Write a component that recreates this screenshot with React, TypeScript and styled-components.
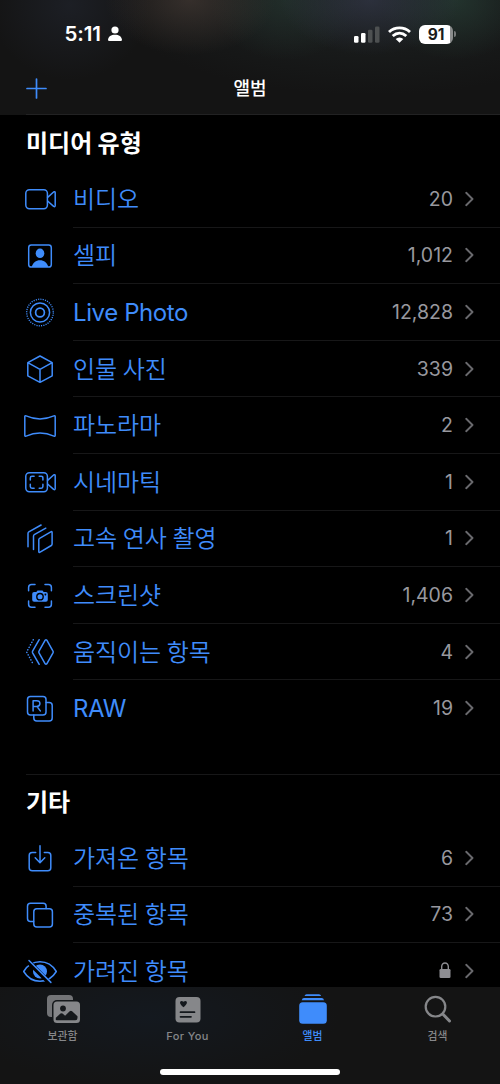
import React from "react";
import styled, { createGlobalStyle } from "styled-components";

const BLUE = "#3f8cfb";
const GREY = "#8e8e93";

const GlobalStyle = createGlobalStyle`
  * { box-sizing: border-box; }
  html, body { margin: 0; padding: 0; background: #000; }
  body {
    font-family: Inter, "Noto Sans CJK KR", "Liberation Sans", sans-serif;
    color: #fff;
    -webkit-font-smoothing: antialiased;
  }
`;

const Screen = styled.div`
  width: 500px;
  height: 1084px;
  display: flex;
  flex-direction: column;
  overflow: hidden;
  background: #000;
`;

const Header = styled.header`
  flex: none;
  height: 115px;
  display: flex;
  flex-direction: column;
  background:
    linear-gradient(90deg, transparent 26px, #222223 26px) bottom / 100% 1px no-repeat,
    radial-gradient(85px 55px at 190px 0, rgba(74, 62, 56, 0.6), transparent),
    radial-gradient(80px 75px at 70px 5px, rgba(34, 38, 48, 0.6), transparent),
    radial-gradient(90px 55px at 370px 0, rgba(54, 58, 78, 0.6), transparent),
    radial-gradient(75px 60px at 285px 0, rgba(38, 56, 50, 0.6), transparent),
    radial-gradient(75px 60px at 455px 0, rgba(38, 60, 52, 0.7), transparent),
    radial-gradient(260px 95px at 370px 0, rgba(34, 42, 42, 0.6), transparent),
    #141414;
`;

const StatusBar = styled.div`
  height: 62px;
  padding: 6px 44px 0 64.5px;
  display: flex;
  align-items: center;
`;

const Clock = styled.span`
  font-size: 20.5px;
  font-weight: 600;
  letter-spacing: -0.1px;
  line-height: 24px;
  width: 43.5px;
`;

const StatusIcons = styled.div`
  margin-left: auto;
  display: flex;
  align-items: center;
  gap: 8px;
`;

const Battery = styled.div`
  display: flex;
  align-items: center;
  gap: 1px;
`;

const BatteryBody = styled.div`
  width: 34px;
  height: 19px;
  border-radius: 6px;
  background: linear-gradient(90deg, #fff 31px, #8b8d8d 31px);
  color: #1a1a1a;
  font-size: 15.5px;
  font-weight: 700;
  line-height: 19px;
  letter-spacing: -0.2px;
  text-align: center;
`;

const BatteryTip = styled.div`
  width: 2px;
  height: 6px;
  border-radius: 0 2px 2px 0;
  background: #777a7a;
`;

const NavBar = styled.div`
  height: 53px;
  padding: 0 26px;
  display: grid;
  grid-template-columns: 1fr auto 1fr;
  align-items: center;
`;

const NavTitle = styled.h1`
  margin: 0;
  font-size: 18px;
  font-weight: 500;
  line-height: 24px;
`;

const Content = styled.main`
  flex: 1;
  min-height: 0;
  overflow: hidden;
`;

const SectionTitle = styled.h2<{ $height: number }>`
  margin: 0;
  height: ${(p) => p.$height}px;
  padding: 2px 0 0 26px;
  display: flex;
  align-items: center;
  font-size: 24px;
  font-weight: 600;
  line-height: 30px;
  word-spacing: -0.7px;
`;

const Divider = styled.hr`
  margin: 36.5px 0 0 26px;
  border: 0;
  height: 1px;
  background: #171718;
`;

const Row = styled.div`
  height: 56.62px;
  padding-left: 20px;
  display: flex;
`;

const IconSlot = styled.div`
  width: 53px;
  display: flex;
  align-items: center;
`;

const RowBody = styled.div<{ $line: boolean }>`
  flex: 1;
  display: flex;
  align-items: center;
  padding-right: 26px;
  border-bottom: 1px solid ${(p) => (p.$line ? "#171718" : "transparent")};
`;

const Label = styled.span<{ $latin: boolean }>`
  flex: 1;
  padding-top: 2px;
  color: ${BLUE};
  font-size: 24px;
  font-weight: ${(p) => (p.$latin ? 400 : 350)};
  letter-spacing: ${(p) => (p.$latin ? "-0.4px" : "-0.05px")};
  word-spacing: ${(p) => (p.$latin ? "0" : "-1px")};
  line-height: 30px;
`;

const Count = styled.span`
  color: #98989e;
  font-size: 19.5px;
  font-weight: 400;
  margin-right: 12px;
  display: flex;
`;

const TabBar = styled.nav`
  flex: none;
  height: 97px;
  display: flex;
  flex-direction: column;
  align-items: center;
  justify-content: space-between;
  padding-bottom: 9px;
  background:
    radial-gradient(190px 70px at 150px 30px, rgba(20, 26, 34, 0.8), transparent),
    #141414;
`;

const Tabs = styled.div`
  width: 100%;
  display: grid;
  grid-template-columns: repeat(4, 1fr);
`;

const Tab = styled.div<{ $active?: boolean }>`
  display: flex;
  flex-direction: column;
  align-items: center;
  padding-top: 4px;
  color: ${(p) => (p.$active ? BLUE : "#86878a")};
`;

const TabLabel = styled.span<{ $latin?: boolean }>`
  font-size: ${(p) => (p.$latin ? 11 : 10.8)}px;
  font-weight: 500;
  letter-spacing: ${(p) => (p.$latin ? "0.35px" : "0")};
  line-height: 16px;
  margin-top: ${(p) => (p.$latin ? 1 : 2)}px;
`;

const HomeIndicator = styled.div`
  width: 180px;
  height: 6px;
  border-radius: 3px;
  background: #fff;
`;

const Glyph = ({ children }: { children: React.ReactNode }) => (
  <svg width="40" height="40" viewBox="-20 -20 40 40" fill="none" stroke={BLUE} strokeWidth="1.5" strokeLinecap="round" strokeLinejoin="round">
    {children}
  </svg>
);

const camcorder = (
  <>
    <rect x="-14.2" y="-9.3" width="21.6" height="19" rx="3.6" />
    <path d="M7.6-1.6 13.6-7q1.6-1 1.6.8V6.600q0 1.800-1.600.8L7.600 2" />
  </>
);

const icons: Record<string, React.ReactNode> = {
  video: camcorder,
  selfie: (
    <>
      <rect x="-11.300" y="-10.900" width="22.600" height="22" rx="2.600" />
      <g fill={BLUE} stroke="none">
        <ellipse cx="0" cy="-2.700" rx="4.300" ry="4.800" />
        <path d="M-8.300 11C-7.300 6.600-4 4.200 0 4.200S7.300 6.600 8.300 11Z" />
      </g>
    </>
  ),
  live: (
    <g transform="translate(0 -0.5)">
      <circle r="4.400" strokeWidth="1.700" />
      <circle r="9.600" />
      <circle r="13.300" strokeWidth="1.300" strokeLinecap="butt" strokeDasharray="1.160 1.160" />
    </g>
  ),
  portrait: <path d="M0-13 12.200-6.300V6.800L0 13.300-12.200 6.800V-6.300ZM-12.200-6.300 0 .4 12.200-6.300M0 .4V13.300" />,
  panorama: (
    <path d="M-15.200-9.200q0-1.300 1.300-.9Q0-4 13.900-10.100q1.300-.4 1.300.9V9.200q0 1.300-1.300.9Q0 4-13.900 10.100q-1.300.4-1.300-.9Z" />
  ),
  cinematic: (
    <>
      {camcorder}
      <path d="M-9.700-1.900V-4.100q0-1.700 1.700-1.700h2.100M-.8-5.800H1.200q1.700 0 1.700 1.700V-1.900M2.900 2.300V4.500q0 1.700-1.700 1.700H-.8M-5.900 6.200H-8q-1.700 0-1.700-1.700V2.300" />
    </>
  ),
  burst: (
    <path d="M-1.200.8q0-1 .8-1.500L10.800-7.200q1.300-.7 1.300.8V5q0 1-.8 1.500L.1 13.200q-1.300.7-1.300-.8ZM5.800-10.800-5.700-4.300q-.8.5-.8 1.500V10.500M1.100-14-11.200-7.100q-.8.5-.8 1.500V7.800" />
  ),
  screenshot: (
    <>
      <path d="M-11.400-5.200V-8.400q0-3 3-3H-5M5-11.400H8.400q3 0 3 3V-5.200M11.400 5V8.200q0 3-3 3H5M-5 11.200H-8.400q-3 0-3-3V5" />
      <path fill={BLUE} stroke="none" fillRule="evenodd" d="M-5.900-4H-3.700L-2.500-5.600H2.500L3.700-4H5.900q1.900 0 1.900 1.900V3.800q0 1.900-1.900 1.900H-5.900q-1.900 0-1.900-1.900V-2.100q0-1.900 1.900-1.900ZM0-3.200A3.900 3.900 0 1 0 0 4.600 3.900 3.900 0 1 0 0-3.200ZM5.400-2.400a.9.9 0 1 0 .01 0Z" />
      <circle cy=".7" r="2.500" fill={BLUE} stroke="none" />
    </>
  ),
  animated: (
    <>
      <path d="M5.200-11.800q.8-1 1.600 0L13-.8q.5.8 0 1.600L6.800 11.800q-.8 1-1.600 0L-1 .8q-.5-.8 0-1.600ZM-.8-12.300-7.400-.8q-.4.800 0 1.600L-.8 12.300" />
      <path strokeDasharray="0.100 2.750" strokeWidth="1.600" d="M-6.800-12.200-13.400 0-6.800 12.200" />
    </>
  ),
  raw: (
    <>
      <rect x="-12.500" y="-12.600" width="18.500" height="18.600" rx="3" />
      <path d="M6.100-6.600H9.200q3 0 3 3V8.900q0 3-3 3H-3.200q-3 0-3-3V6.100" />
      <path d="M-6.900 1.900V-8.300H-3.300q3.200 0 3.200 2.900t-3.200 2.900H-6.900M-3-2.500.3 1.900" />
    </>
  ),
  imported: (
    <path d="M-4.300-5.500H-7.800q-3 0-3 3V9.700q0 3 3 3H7.800q3 0 3-3V-2.500q0-3-3-3H4.300M0-12.300V4.600M-4.800-.2 0 4.800 4.800-.2" />
  ),
  duplicates: (
    <>
      <rect x="-6.200" y="-6.300" width="18.600" height="18.400" rx="3" />
      <path d="M6.100-6.400V-8.800q0-3-3-3H-9.500q-3 0-3 3V3.500q0 3 3 3h3.100" />
    </>
  ),
  hidden: (
    <>
      <path d="M-16.300.5C-12.500-5.800-6.600-9.200 0-9.200S12.500-5.800 16.300.5C12.500 6.800 6.600 10.200 0 10.200S-12.500 6.800-16.300.5Z" />
      <circle cy=".5" r="7" fill={BLUE} stroke="none" />
      <path d="M-11.800-9.500 9.800 12.100" stroke="#000" strokeWidth="4.600" />
      <path d="M-11-10.500 10.900 11.400" />
    </>
  ),
};

const Chevron = () => (
  <svg width="9" height="16" viewBox="0 0 9 16" fill="none" stroke="#69696d" strokeWidth="1.900" strokeLinecap="round" strokeLinejoin="round">
    <path d="M1.200 1.800 7.500 8 1.200 14.200" />
  </svg>
);

const Lock = () => (
  <svg width="15" height="17" viewBox="-1 0 15 17">
    <rect x=".5" y="7" width="11" height="9" rx="1.300" fill={GREY} />
    <path d="M2.700 8V4.600a3.300 3.600 0 0 1 6.600 0V8" fill="none" stroke={GREY} strokeWidth="1.400" />
  </svg>
);

type Item = { icon: string; label: string; count?: string };

const mediaTypes: Item[] = [
  { icon: "video", label: "비디오", count: "20" },
  { icon: "selfie", label: "셀피", count: "1,012" },
  { icon: "live", label: "Live Photo", count: "12,828" },
  { icon: "portrait", label: "인물 사진", count: "339" },
  { icon: "panorama", label: "파노라마", count: "2" },
  { icon: "cinematic", label: "시네마틱", count: "1" },
  { icon: "burst", label: "고속 연사 촬영", count: "1" },
  { icon: "screenshot", label: "스크린샷", count: "1,406" },
  { icon: "animated", label: "움직이는 항목", count: "4" },
  { icon: "raw", label: "RAW", count: "19" },
];

const others: Item[] = [
  { icon: "imported", label: "가져온 항목", count: "6" },
  { icon: "duplicates", label: "중복된 항목", count: "73" },
  { icon: "hidden", label: "가려진 항목" },
];

const List = ({ items }: { items: Item[] }) => (
  <>
    {items.map((item, i) => (
      <Row key={item.icon}>
        <IconSlot>
          <Glyph>{icons[item.icon]}</Glyph>
        </IconSlot>
        <RowBody $line={i < items.length - 1}>
          <Label $latin={/^[A-Z]/.test(item.label)}>{item.label}</Label>
          <Count>{item.count ?? <Lock />}</Count>
          <Chevron />
        </RowBody>
      </Row>
    ))}
  </>
);

export default function App() {
  return (
    <Screen>
      <GlobalStyle />
      <Header>
        <StatusBar>
          <Clock>5:11</Clock>
          <svg width="14" height="16" viewBox="0 0 14 16" fill="#fff">
            <circle cx="7" cy="4" r="3.600" />
            <path d="M0 13.800C.3 10.600 3 8.700 7 8.700s6.700 1.900 7 5.100q0 1.200-1.200 1.200H1.200Q0 15 0 13.800Z" />
          </svg>
          <StatusIcons>
            <svg width="26" height="17" viewBox="0 0 26 17" fill="#fff">
              <rect x="0" y="10" width="4.500" height="6.700" rx="1.300" />
              <rect x="7" y="7" width="4.500" height="9.700" rx="1.300" />
              <rect x="14" y="3.700" width="4.500" height="13" rx="1.300" fill="#4d5051" />
              <rect x="21" y=".4" width="4.500" height="16.300" rx="1.300" fill="#4d5051" />
            </svg>
            <svg width="23" height="17" viewBox="0 0 23 17" fill="none" stroke="#fff" strokeWidth="2.900">
              <path d="M1 6Q5.500 1.900 11.500 1.900T22 6" />
              <path d="M4.700 10Q7.900 7.100 11.500 7.100T18.300 10" />
              <path d="M11.500 16.700 7.700 12.900Q9.300 11.400 11.500 11.400t3.800 1.500Z" fill="#fff" stroke="none" />
            </svg>
            <Battery>
              <BatteryBody>91</BatteryBody>
              <BatteryTip />
            </Battery>
          </StatusIcons>
        </StatusBar>
        <NavBar>
          <svg width="21" height="21" viewBox="0 0 21 21" stroke={BLUE} strokeWidth="1.700" strokeLinecap="round">
            <path d="M10.500 1v19M1 10.500h19" />
          </svg>
          <NavTitle>앨범</NavTitle>
        </NavBar>
      </Header>
      <Content>
        <SectionTitle $height={56}>미디어 유형</SectionTitle>
        <List items={mediaTypes} />
        <Divider />
        <SectionTitle $height={55.300}>기타</SectionTitle>
        <List items={others} />
      </Content>
      <TabBar>
        <Tabs>
          <Tab>
            <svg width="36" height="36" viewBox="0 0 36 36">
              <rect x="2" y="4" width="26" height="22" rx="4" fill="#737477" />
              <rect x="7" y="9" width="29" height="24" rx="5" fill="#15181b" />
              <rect x="8.500" y="10.500" width="26.500" height="21.500" rx="3.500" fill="currentColor" />
              <circle cx="18" cy="17.500" r="2.900" fill="#15181b" />
              <path d="M10.800 29v-2.200l4.700-4.200q1-.8 2 0l2.600 2.100 4.600-4.500q1.200-1 2.400 0l5.400 5V27q0 2.200-2.200 2.200H12Z" fill="#15181b" />
            </svg>
            <TabLabel>보관함</TabLabel>
          </Tab>
          <Tab>
            <svg width="36" height="36" viewBox="0 0 36 36">
              <rect x="5.500" y="6" width="25" height="25.500" rx="4" fill="currentColor" />
              <path d="M13.500 16.200C7.600 12 10.500 8.300 13.500 10.800c3-2.500 5.900 1.200 0 5.400Z" fill="#14181d" />
              <path d="M10.500 21.200h14M10.500 25.800H21" stroke="#14181d" strokeWidth="1.700" strokeLinecap="round" />
            </svg>
            <TabLabel $latin>For You</TabLabel>
          </Tab>
          <Tab $active>
            <svg width="36" height="36" viewBox="0 0 36 36" fill="currentColor">
              <path d="M11.500 3.200H24Q25.600 3.200 26.100 5H9.500Q10 3.200 11.500 3.200Z" />
              <path d="M9 7H26.700Q28.500 7 29 9.200H6.700Q7.200 7 9 7Z" />
              <rect x="4.200" y="11.200" width="27.600" height="21.600" rx="3.500" />
            </svg>
            <TabLabel>앨범</TabLabel>
          </Tab>
          <Tab>
            <svg width="36" height="36" viewBox="0 0 36 36" fill="none" stroke="currentColor" strokeLinecap="round">
              <circle cx="15.500" cy="15.700" r="9.800" strokeWidth="2.200" />
              <path d="M23 23.200 29.500 30" strokeWidth="3" />
            </svg>
            <TabLabel>검색</TabLabel>
          </Tab>
        </Tabs>
        <HomeIndicator />
      </TabBar>
    </Screen>
  );
}
